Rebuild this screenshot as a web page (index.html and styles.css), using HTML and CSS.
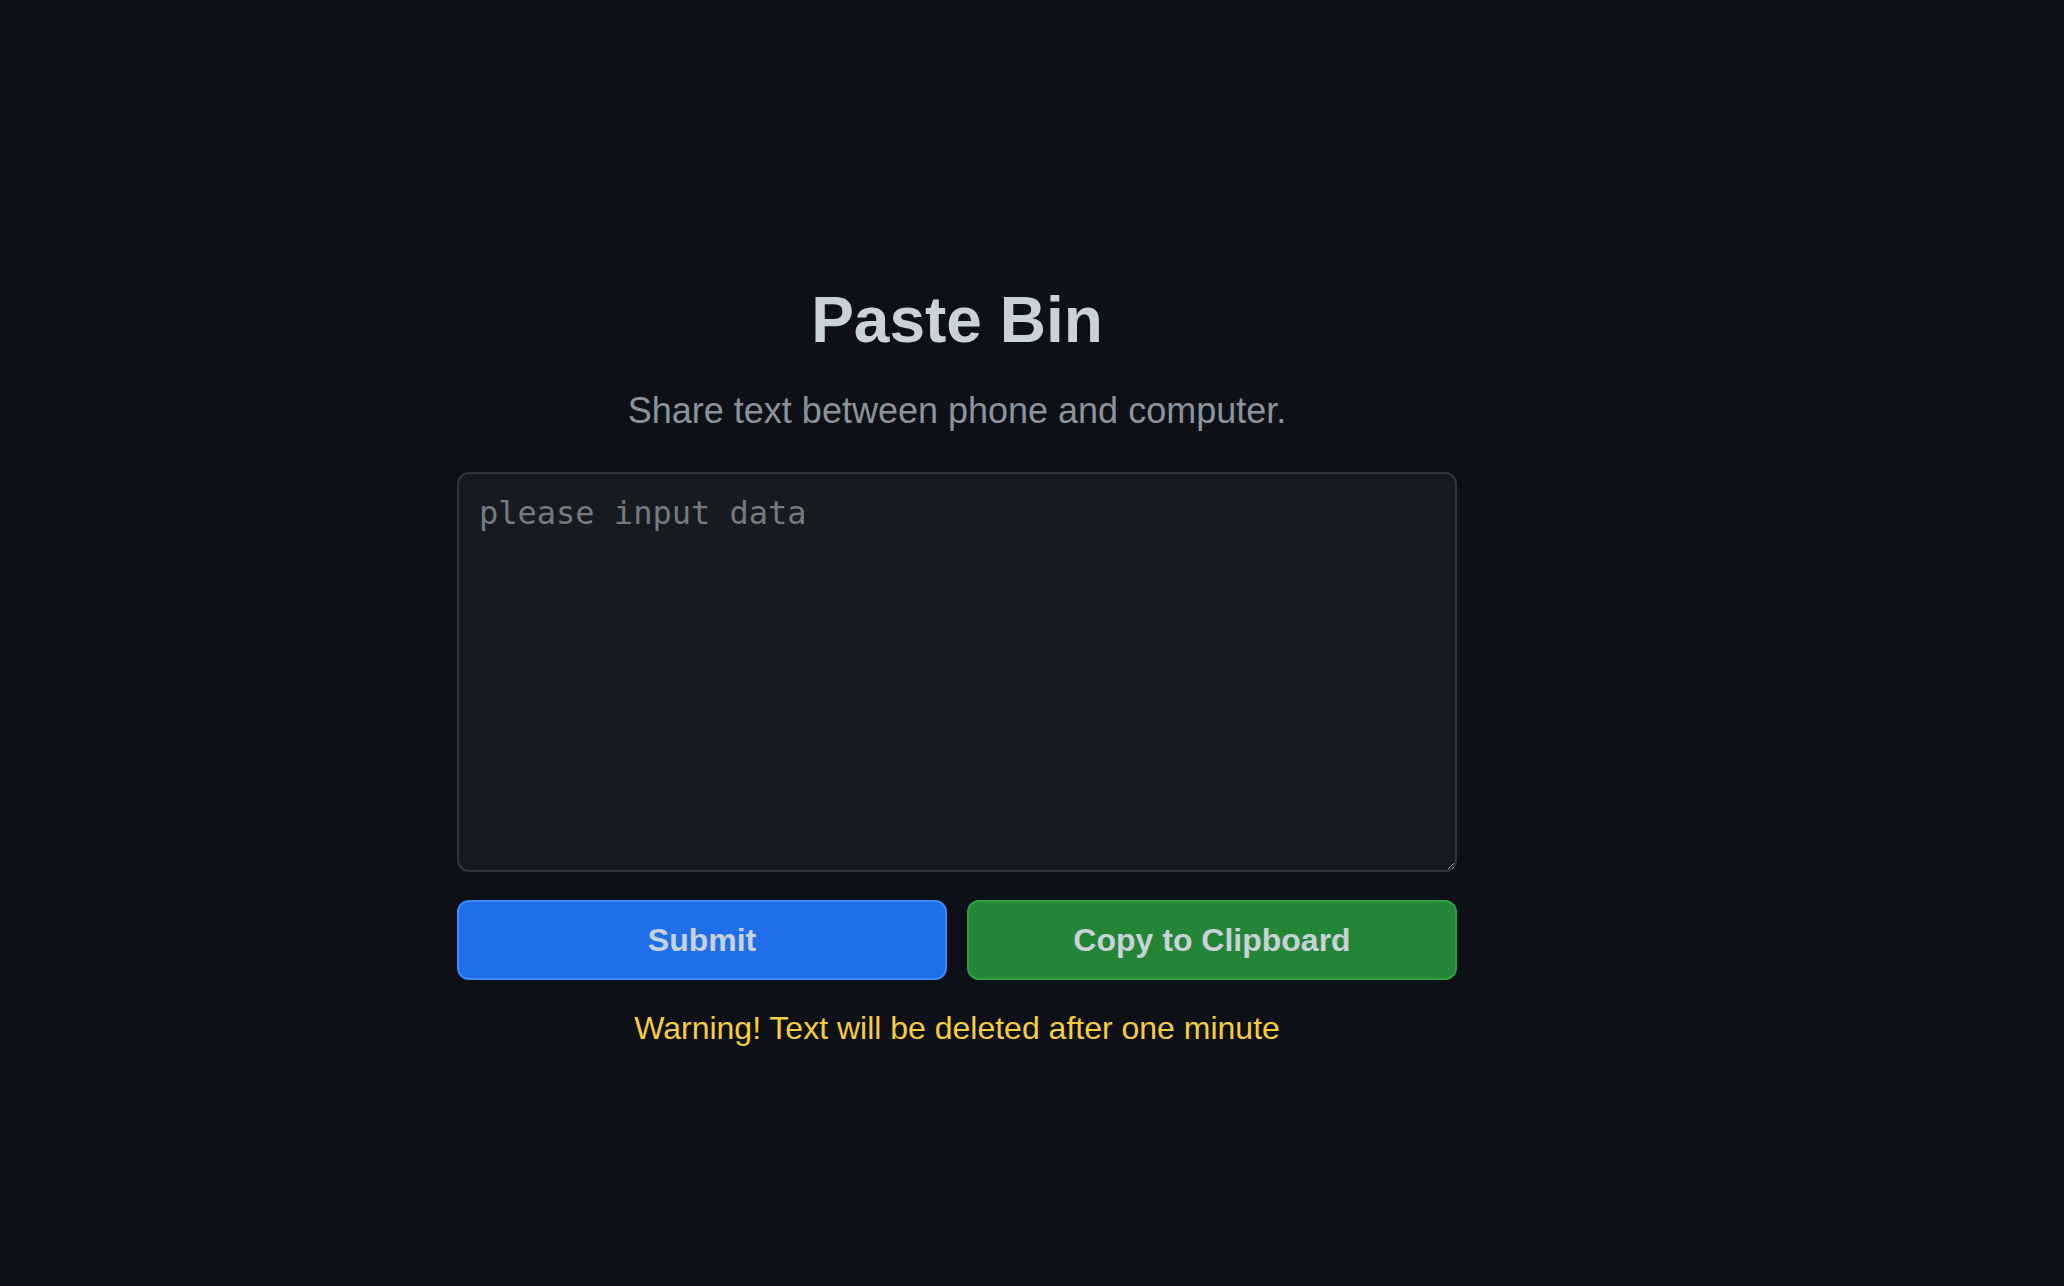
FILE: index.html
```html
<!DOCTYPE html>
<html lang="en">
<head>
    <meta charset="UTF-8">
    <meta name="viewport" content="width=device-width, initial-scale=1.0">
    <title>Paste Bin</title>
    <link rel="stylesheet" href="styles.css">
</head>
<body>
    <main class="page">
        <section class="paste">
            <h1 class="paste-title">Paste Bin</h1>
            <p class="paste-sub">Share text between phone and computer.</p>
            <form id="pasteForm" class="paste-form">
                <textarea id="data" class="paste-text" placeholder="please input data"></textarea>
                <div class="paste-actions">
                    <button type="submit" class="btn btn-submit">Submit</button>
                    <button type="button" class="btn btn-copy">Copy to Clipboard</button>
                </div>
            </form>
            <p class="paste-warning">Warning! Text will be deleted after one minute</p>
        </section>
    </main>
</body>
</html>
```

FILE: styles.css
```css
    body {
        margin: 0;
        padding: 0;
        background-color: #0d1117;
        font-family: "Liberation Sans", Arial, sans-serif;
        color: #c9d1d9;
    }
    .page {
        display: flex;
        justify-content: center;
        padding: 284px 150px 0 0;
    }
    .paste {
        width: 1000px;
        text-align: center;
    }
    .paste-title {
        margin: 0;
        font-size: 64px;
        line-height: 72px;
        font-weight: bold;
        color: #c9d1d9;
    }
    .paste-sub {
        margin: 35px 0 0;
        font-size: 36px;
        line-height: 40px;
        color: #8b949e;
    }
    .paste-form {
        margin-top: 41px;
    }
    .paste-text {
        display: block;
        box-sizing: border-box;
        width: 100%;
        height: 400px;
        padding: 20px;
        margin: 0;
        font-family: "DejaVu Sans Mono", monospace;
        font-size: 32px;
        color: #c9d1d9;
        background-color: #161b22;
        border: 2px solid #30363d;
        border-radius: 12px;
        outline: none;
        color-scheme: dark;
    }
    .paste-text::placeholder {
        color: #757a80;
    }
    .paste-actions {
        display: flex;
        gap: 20px;
        margin-top: 28px;
    }
    .btn {
        flex: 1;
        height: 80px;
        font-family: "Liberation Sans", Arial, sans-serif;
        font-size: 32px;
        font-weight: bold;
        color: #c9d1d9;
        border-radius: 12px;
        cursor: pointer;
    }
    .btn-submit {
        background-color: #1f6feb;
        border: 2px solid #388bfd;
    }
    .btn-copy {
        background-color: #238636;
        border: 2px solid #2ea043;
    }
    .paste-warning {
        margin: 30px 0 0;
        font-size: 32px;
        line-height: 36px;
        color: #f5cd3f;
    }
```
